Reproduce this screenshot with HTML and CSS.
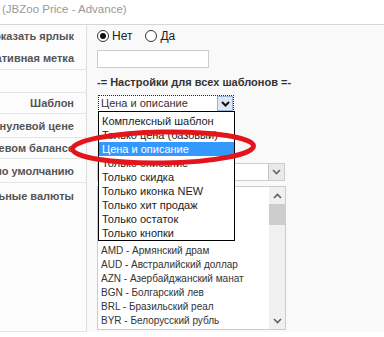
FILE: index.html
```html
<!DOCTYPE html>
<html lang="ru">
<head>
    <meta charset="UTF-8">
    <meta name="viewport" content="width=device-width, initial-scale=1.0">
    <title>JBZoo Price - Advance</title>
    <link rel="stylesheet" href="styles.css">
</head>
<body>
    <div class="legend">(JBZoo Price - Advance)</div>
    <div class="params">
        <div class="label first">Показать ярлык</div>
        <div class="field">
            <label class="radio"><span class="radio-dot on"></span>Нет</label>
            <label class="radio"><span class="radio-dot"></span>Да</label>
        </div>

        <div class="label">Альтернативная метка</div>
        <div class="field"><div class="text-input"></div></div>

        <div class="label"></div>
        <div class="field"><b class="title">-= Настройки для всех шаблонов =-</b></div>

        <div class="label">Шаблон</div>
        <div class="field">
            <div class="select focus">
                <div class="select-text">Цена и описание</div>
                <div class="select-btn">
                    <svg width="9" height="6" viewBox="0 0 9 6"><polyline points="1,1 4.5,4.5 8,1" fill="none" stroke="#111" stroke-width="2"/></svg>
                </div>
                <ul class="dropdown">
                    <li>Комплексный шаблон</li>
                    <li>Только цена (базовый)</li>
                    <li class="active">Цена и описание</li>
                    <li>Только описание</li>
                    <li>Только скидка</li>
                    <li>Только иконка NEW</li>
                    <li>Только хит продаж</li>
                    <li>Только остаток</li>
                    <li>Только кнопки</li>
                </ul>
            </div>
        </div>

        <div class="label">При нулевой цене</div>
        <div class="field"><div class="select small"><div class="select-text">Скрыть</div></div></div>

        <div class="label">При нулевом балансе</div>
        <div class="field"><div class="select small"><div class="select-text">Скрыть</div></div></div>

        <div class="label">Валюта по умолчанию</div>
        <div class="field top">
            <div class="select wide">
                <div class="select-text">RUB</div>
                <div class="select-btn gray">
                    <svg width="9" height="6" viewBox="0 0 9 6"><polyline points="1,1 4.5,4.5 8,1" fill="none" stroke="#666" stroke-width="1.6"/></svg>
                </div>
            </div>
        </div>

        <div class="label">Дополнительные валюты</div>
        <div class="field top">
            <div class="listbox">
                <ul class="options">
                    <li>RUB - Рубль</li>
                    <li>AED - Дирхам</li>
                    <li>AFN - Афгани</li>
                    <li>ALL - Лек</li>
                    <li>AMD - Армянский драм</li>
                    <li>AUD - Австралийский доллар</li>
                    <li>AZN - Азербайджанский манат</li>
                    <li>BGN - Болгарский лев</li>
                    <li>BRL - Бразильский реал</li>
                    <li>BYR - Белорусский рубль</li>
                </ul>
                <div class="scroll">
                    <div class="scroll-arrow">
                        <svg width="9" height="6" viewBox="0 0 9 6"><polyline points="1,5 4.5,1.5 8,5" fill="none" stroke="#606060" stroke-width="1.6"/></svg>
                    </div>
                    <div class="scroll-thumb"></div>
                    <div class="scroll-track"></div>
                    <div class="scroll-arrow">
                        <svg width="9" height="6" viewBox="0 0 9 6"><polyline points="1,1 4.5,4.5 8,1" fill="none" stroke="#606060" stroke-width="1.6"/></svg>
                    </div>
                </div>
            </div>
        </div>
    </div>

    <!-- red marker drawn over the screenshot -->
    <svg class="marker" width="384" height="337" viewBox="0 0 384 337">
        <ellipse cx="163" cy="147.5" rx="90.5" ry="15.5" transform="rotate(-1 163 147.5)" fill="none" stroke="#e3151c" stroke-width="5"/>
    </svg>
</body>
</html>
```

FILE: styles.css
```css
body { margin: 0; width: 384px; height: 337px; overflow: hidden; position: relative; background: #fff; font-family: "Liberation Sans", Arial, sans-serif; font-size: 12px; color: #333; }
ul { list-style-type: none; margin: 0; padding: 0; }
.legend { height: 24px; padding-left: 2px; color: #999; font-size: 11.5px; line-height: 19px; white-space: nowrap; }
.params { display: grid; grid-template-columns: 87px 1fr; grid-template-rows: 22px 23px 23px 21px 24px 21px 24px 149px; border-top: 1px solid #d6d6d6; background: #f9f9f9; }
.label { display: flex; justify-content: flex-end; align-items: center; padding-right: 12px; overflow: hidden; white-space: nowrap; border-right: 1px solid #dedede; border-bottom: 1px solid #e4e4e4; background: #fcfcfc; font-size: 11px; font-weight: bold; color: #555; }
.label.first { border-bottom-color: #fcfcfc; }
.params > .label:nth-last-child(2) { align-items: flex-start; padding-top: 7px; }
.field { display: flex; align-items: center; padding-left: 10px; position: relative; }
.field.top { align-items: flex-start; padding-top: 4px; }
.radio { display: flex; align-items: center; margin-right: 13px; color: #222; }
.radio-dot { width: 12px; height: 12px; box-sizing: border-box; border: 1px solid #333; border-radius: 50%; background: #fff; margin-right: 3px; display: flex; align-items: center; justify-content: center; }
.radio-dot.on::after { content: ""; width: 6px; height: 6px; border-radius: 50%; background: #111; }
.text-input { width: 112px; height: 18px; box-sizing: border-box; border: 1px solid #ccc; background: #fff; }
.title { font-size: 11px; color: #333; white-space: nowrap; }
.select { position: relative; display: flex; box-sizing: border-box; height: 17px; margin-left: 1px; border: 1px solid #ccc; background: #fff; font-size: 11px; color: #333; }
.select.focus { width: 136px; border: 1px dotted #222; }
.select.small { width: 110px; }
.select.wide { width: 188px; height: 18px; margin-left: 0; }
.select-text { flex: 1; padding-left: 2px; line-height: 15px; white-space: nowrap; overflow: hidden; }
.select-btn { width: 16px; display: flex; align-items: center; justify-content: center; box-sizing: border-box; border: 1px solid #9fb4d4; background: #dde6f2; }
.select-btn.gray { border: none; border-left: 1px solid #c4c4c4; background: #e9e9e9; }
.dropdown { position: absolute; left: -1px; top: 15px; z-index: 2; width: 137px; box-sizing: border-box; padding-top: 2px; border: 1px solid #000; background: #fff; }
.dropdown li { height: 14px; line-height: 14px; padding-left: 3px; white-space: nowrap; overflow: hidden; color: #222; }
.dropdown li.active { background: #3399ff; color: #fff; }
.listbox { display: flex; width: 189px; height: 144px; box-sizing: border-box; margin-top: -1px; border: 1px solid #ccc; background: #fff; }
.options { flex: 1; padding-top: 1px; overflow: hidden; }
.options li { height: 14px; line-height: 14px; padding-left: 3px; white-space: nowrap; font-size: 10px; color: #333; }
.scroll { width: 16px; display: flex; flex-direction: column; background: #f0f0f0; }
.scroll-arrow { height: 17px; display: flex; align-items: center; justify-content: center; }
.scroll-thumb { height: 21px; background: #cdcdcd; }
.scroll-track { flex: 1; }
.marker { position: absolute; left: 0; top: 0; pointer-events: none; z-index: 5; }
```
